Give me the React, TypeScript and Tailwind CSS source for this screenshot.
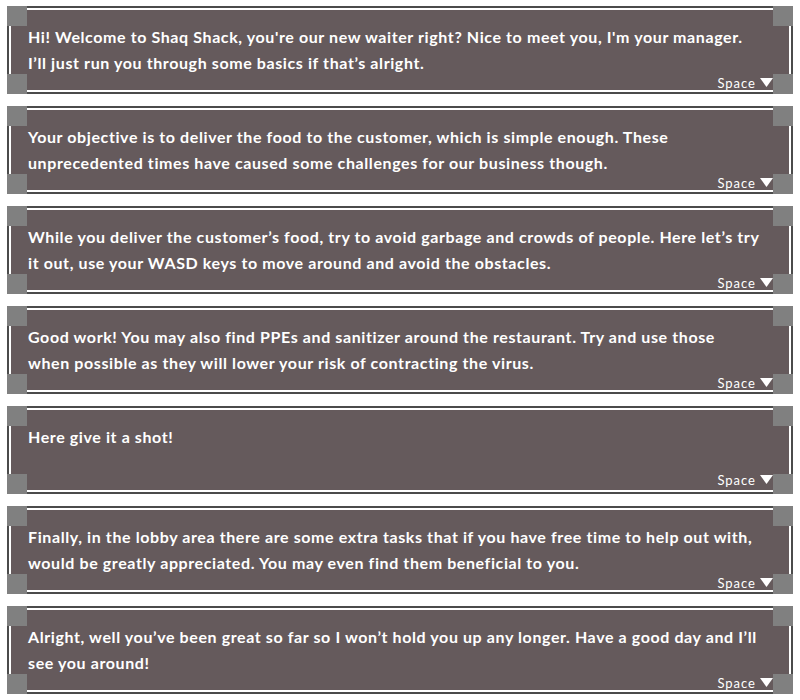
import React from 'react';

type Dialog = {
  id: number;
  lines: string[];
};

const dialogs: Dialog[] = [
  {
    id: 1,
    lines: [
      "Hi! Welcome to Shaq Shack, you're our new waiter right? Nice to meet you, I'm your manager.",
      'I’ll just run you through some basics if that’s alright.',
    ],
  },
  {
    id: 2,
    lines: [
      'Your objective is to deliver the food to the customer, which is simple enough. These',
      'unprecedented times have caused some challenges for our business though.',
    ],
  },
  {
    id: 3,
    lines: [
      'While you deliver the customer’s food, try to avoid garbage and crowds of people. Here let’s try',
      'it out, use your WASD keys to move around and avoid the obstacles.',
    ],
  },
  {
    id: 4,
    lines: [
      'Good work! You may also find PPEs and sanitizer around the restaurant. Try and use those',
      'when possible as they will lower your risk of contracting the virus.',
    ],
  },
  {
    id: 5,
    lines: ['Here give it a shot!'],
  },
  {
    id: 6,
    lines: [
      'Finally, in the lobby area there are some extra tasks that if you have free time to help out with,',
      'would be greatly appreciated. You may even find them beneficial to you.',
    ],
  },
  {
    id: 7,
    lines: [
      'Alright, well you’ve been great so far so I won’t hold you up any longer. Have a good day and I’ll',
      'see you around!',
    ],
  },
];

// grey corner tabs that sit over the frame
const Corner: React.FC<{ className: string }> = ({ className }) => (
  <div className={`absolute w-5 h-5 bg-[#808080] ${className}`} />
);

const DialogBox: React.FC<{ dialog: Dialog }> = ({ dialog }) => (
  <div className="relative h-[88px] border-2 border-[#4b4b4b] bg-white p-[2px]">
    <div className="flex h-full flex-col bg-[#655a5c]">
      <p className="whitespace-nowrap px-[17px] pt-[14px] text-[16px] leading-[26px] font-bold tracking-[0.6px] text-white">
        {dialog.lines.map((line, i) => (
          <React.Fragment key={i}>
            {line}
            {i < dialog.lines.length - 1 && <br />}
          </React.Fragment>
        ))}
      </p>
      <div className="mt-auto flex items-center gap-[4px] self-end pr-[16px] pb-[3px] text-white">
        <span className="text-[13px] leading-[14px] font-normal tracking-[1px]">Space</span>
        <svg className="h-[10px] w-[13px]" viewBox="0 0 13 10">
          <polygon points="0,0 13,0 6.5,9" fill="#ffffff" />
        </svg>
      </div>
    </div>
    <Corner className="-top-[2px] -left-[2px]" />
    <Corner className="-top-[2px] -right-[2px]" />
    <Corner className="-bottom-[2px] -left-[2px]" />
    <Corner className="-bottom-[2px] -right-[2px]" />
  </div>
);

const App: React.FC = () => {
  return (
    <div className="flex h-[700px] w-[800px] flex-col gap-[12px] overflow-hidden bg-white px-[7px] pt-[6px] font-['Lato','Liberation_Sans',sans-serif]">
      {dialogs.map((d) => (
        <DialogBox key={d.id} dialog={d} />
      ))}
    </div>
  );
};

export default App;
